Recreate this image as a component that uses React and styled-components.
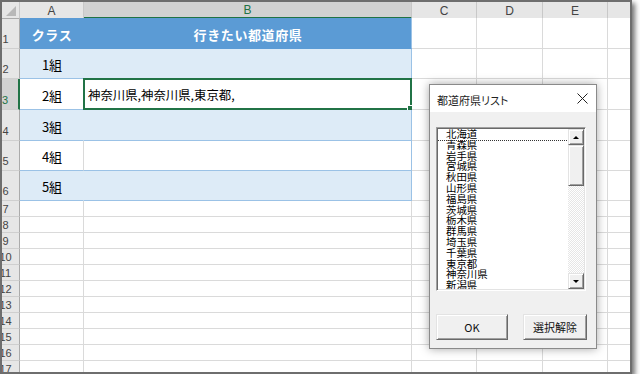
import React from 'react';
import styled, { createGlobalStyle } from 'styled-components';

const JP = `"Noto Sans CJK JP", "Noto Sans", sans-serif`;
const UI = `"Liberation Sans", Arial, sans-serif`;

const GREEN = '#217346';
const GRID = '#dadada';
const TBL = '#9bc2e6';

const GlobalStyle = createGlobalStyle`
  body {
    margin: 0;
    background: #fff;
  }
`;

/* outer screenshot frame */
const Frame = styled.div`
  position: relative;
  width: 628px;
  height: 370px;
  border: 2px solid #6e6e6e;
  box-shadow: 3px 3px 5px rgba(0, 0, 0, 0.55);
  overflow: hidden;
  background: #fff;
`;

const Sheet = styled.div`
  margin-left: -10px;
  display: flex;
  flex-direction: column;
`;

const Row = styled.div`
  display: grid;
  grid-template-columns: 28px 64px 328px 65px 66px 65px 64px;
  height: ${({ $h }) => $h}px;
  flex-shrink: 0;
`;

const ColHead = styled.div`
  box-sizing: border-box;
  position: relative;
  display: flex;
  align-items: center;
  justify-content: center;
  padding-top: 1px;
  font-family: ${UI};
  font-size: 12px;
  color: ${({ $sel }) => ($sel ? GREEN : '#444')};
  background: ${({ $sel }) => ($sel ? '#d2d2d2' : '#e6e6e6')};
  border-right: 1px solid #c8c8c8;
  border-bottom: ${({ $sel }) => ($sel ? `2px solid ${GREEN}` : '1px solid #ababab')};
`;

const Corner = styled(ColHead)`
  &::after {
    content: '';
    position: absolute;
    right: 3px;
    bottom: 2px;
    width: 0;
    height: 0;
    border-left: 10px solid transparent;
    border-bottom: 10px solid #b8b8b8;
  }
`;

const RowHead = styled.div`
  box-sizing: border-box;
  display: flex;
  align-items: flex-end;
  justify-content: center;
  padding-bottom: ${({ $tall }) => ($tall ? 3 : 1)}px;
  font-family: ${UI};
  font-size: 11px;
  line-height: 11px;
  color: ${({ $sel }) => ($sel ? GREEN : '#444')};
  background: ${({ $sel }) => ($sel ? '#d2d2d2' : '#e6e6e6')};
  border-right: ${({ $sel }) => ($sel ? `2px solid ${GREEN}` : '1px solid #ababab')};
  border-bottom: 1px solid #cfcfcf;
`;

const fills = {
  head: { bg: '#5b9bd5', bottom: '#5b9bd5', right: '#5b9bd5', edge: TBL },
  band: { bg: '#ddebf7', bottom: TBL, right: '#ddebf7', edge: TBL },
  plain: { bg: '#fff', bottom: TBL, right: GRID, edge: TBL },
  grid: { bg: '#fff', bottom: GRID, right: GRID, edge: GRID },
};

const Cell = styled.div`
  box-sizing: border-box;
  position: relative;
  display: flex;
  align-items: center;
  justify-content: ${({ $center }) => ($center ? 'center' : 'flex-start')};
  padding: 2px 3px 0 4px;
  font-family: ${JP};
  font-size: 13px;
  font-weight: ${({ $kind }) => ($kind === 'head' ? 700 : 400)};
  letter-spacing: ${({ $kind }) => ($kind === 'head' ? '0.6px' : '0')};
  color: ${({ $kind }) => ($kind === 'head' ? '#fff' : '#000')};
  white-space: nowrap;
  background: ${({ $kind }) => fills[$kind].bg};
  border-bottom: 1px solid ${({ $kind }) => fills[$kind].bottom};
  border-right: 1px solid ${({ $kind, $edge }) => ($edge ? fills[$kind].edge : fills[$kind].right)};
`;

const Selection = styled.div`
  position: absolute;
  left: -1px;
  top: -1px;
  right: -1px;
  bottom: -1px;
  border: 2px solid ${GREEN};
  pointer-events: none;

  &::after {
    content: '';
    position: absolute;
    right: -4px;
    bottom: -4px;
    width: 5px;
    height: 5px;
    background: ${GREEN};
    border: 1px solid #fff;
  }
`;

const CellText = styled.span`
  font-size: ${({ $small }) => ($small ? '12.4px' : 'inherit')};
`;

/* ---------- user form ---------- */
const Dialog = styled.div`
  position: absolute;
  left: 427px;
  top: 82px;
  width: 166px;
  height: 263px;
  border: 1px solid #8a8a8a;
  box-shadow: 0 0 9px rgba(0, 0, 0, 0.35);
  background: #f0f0f0;
  display: flex;
  flex-direction: column;
`;

const TitleBar = styled.div`
  height: 27px;
  flex-shrink: 0;
  background: #fff;
  display: flex;
  align-items: center;
  justify-content: space-between;
  padding: 0 8px 0 7px;
`;

const Title = styled.span`
  font-family: ${JP};
  font-size: 11px;
  font-feature-settings: 'palt';
  color: #222;
  padding-top: 2px;
`;

const Body = styled.div`
  padding: 15px 0 0 6px;
  display: flex;
  flex-direction: column;
`;

const ListBox = styled.div`
  box-sizing: border-box;
  width: 150px;
  height: 164px;
  padding: 1px;
  border: 1px solid;
  border-color: #a0a0a0 #fff #fff #a0a0a0;
  box-shadow: inset 1px 1px 0 #696969, inset -1px -1px 0 #e3e3e3;
  display: flex;
`;

const Items = styled.ul`
  flex: 1;
  margin: 0;
  padding: 0;
  list-style: none;
  background: #fff;
  overflow: hidden;
`;

const Item = styled.li`
  height: 10.8px;
  padding-left: 8px;
  font-family: ${JP};
  font-size: 10.4px;
  line-height: 10.8px;
  color: #000;
  white-space: nowrap;
  outline: ${({ $focus }) => ($focus ? '1px dotted #333' : 'none')};
  outline-offset: 0;
`;

const ScrollBar = styled.div`
  width: 16px;
  display: flex;
  flex-direction: column;
`;

const raised = `
  box-sizing: border-box;
  background: #f0f0f0;
  border: 1px solid;
  border-color: #e3e3e3 #696969 #696969 #e3e3e3;
  box-shadow: inset 1px 1px 0 #fff, inset -1px -1px 0 #a0a0a0;
`;

const ScrollBtn = styled.div`
  ${raised}
  height: 16px;
  display: flex;
  align-items: center;
  justify-content: center;

  &::before {
    content: '';
    width: 0;
    height: 0;
    border-left: 3px solid transparent;
    border-right: 3px solid transparent;
    ${({ $down }) => ($down ? 'border-top: 3px solid #000;' : 'border-bottom: 3px solid #000;')}
  }
`;

const Thumb = styled.div`
  ${raised}
  height: 41px;
`;

const Track = styled.div`
  flex: 1;
  background-color: #fff;
  background-image: repeating-conic-gradient(#e6e6e6 0 25%, #fff 0 50%);
  background-size: 2px 2px;
`;

const Buttons = styled.div`
  margin-top: 23px;
  display: flex;
  gap: 15px;
`;

const Button = styled.button`
  ${raised}
  width: ${({ $w }) => $w}px;
  height: 26px;
  padding: 0;
  font-family: ${JP};
  font-size: 11px;
  color: #111;
`;

const CloseIcon = () => (
  <svg width="11" height="11" viewBox="0 0 11 11">
    <path d="M0.5 0.5 L10.5 10.5 M10.5 0.5 L0.5 10.5" stroke="#222" strokeWidth="1" fill="none" />
  </svg>
);

const tableRows = [
  { n: 1, h: 31, kind: 'head', a: 'クラス', b: '行きたい都道府県' },
  { n: 2, h: 30, kind: 'band', a: '1組' },
  { n: 3, h: 31, kind: 'plain', a: '2組', b: '神奈川県,神奈川県,東京都,', sel: true },
  { n: 4, h: 31, kind: 'band', a: '3組' },
  { n: 5, h: 30, kind: 'plain', a: '4組' },
  { n: 6, h: 30, kind: 'band', a: '5組' },
];

const prefs = [
  '北海道', '青森県', '岩手県', '宮城県', '秋田県', '山形県', '福島県', '茨城県',
  '栃木県', '群馬県', '埼玉県', '千葉県', '東京都', '神奈川県', '新潟県',
];

const columns = ['A', 'B', 'C', 'D', 'E', ''];

export default function App() {
  return (
    <>
      <GlobalStyle />
      <Frame>
        <Sheet>
          <Row $h={16}>
            <Corner />
            {columns.map((c) => (
              <ColHead key={c || 'F'} $sel={c === 'B'}>{c}</ColHead>
            ))}
          </Row>

          {tableRows.map((r) => (
            <Row key={r.n} $h={r.h}>
              <RowHead $tall $sel={r.sel}>{r.n}</RowHead>
              <Cell $kind={r.kind} $center>{r.a}</Cell>
              <Cell $kind={r.kind} $edge $center={r.kind === 'head'}>
                <CellText $small={!!r.sel}>{r.b}</CellText>
                {r.sel && <Selection />}
              </Cell>
              <Cell $kind="grid" />
              <Cell $kind="grid" />
              <Cell $kind="grid" />
              <Cell $kind="grid" />
            </Row>
          ))}

          {Array.from({ length: 11 }, (_, i) => i + 7).map((n) => (
            <Row key={n} $h={16}>
              <RowHead>{n}</RowHead>
              {columns.map((c) => (
                <Cell key={c || 'F'} $kind="grid" />
              ))}
            </Row>
          ))}
        </Sheet>

        <Dialog>
          <TitleBar>
            <Title>都道府県リスト</Title>
            <CloseIcon />
          </TitleBar>
          <Body>
            <ListBox>
              <Items>
                {prefs.map((p, i) => (
                  <Item key={p} $focus={i === 0}>{p}</Item>
                ))}
              </Items>
              <ScrollBar>
                <ScrollBtn />
                <Thumb />
                <Track />
                <ScrollBtn $down />
              </ScrollBar>
            </ListBox>
            <Buttons>
              <Button $w={72}>OK</Button>
              <Button $w={64}>選択解除</Button>
            </Buttons>
          </Body>
        </Dialog>
      </Frame>
    </>
  );
}
